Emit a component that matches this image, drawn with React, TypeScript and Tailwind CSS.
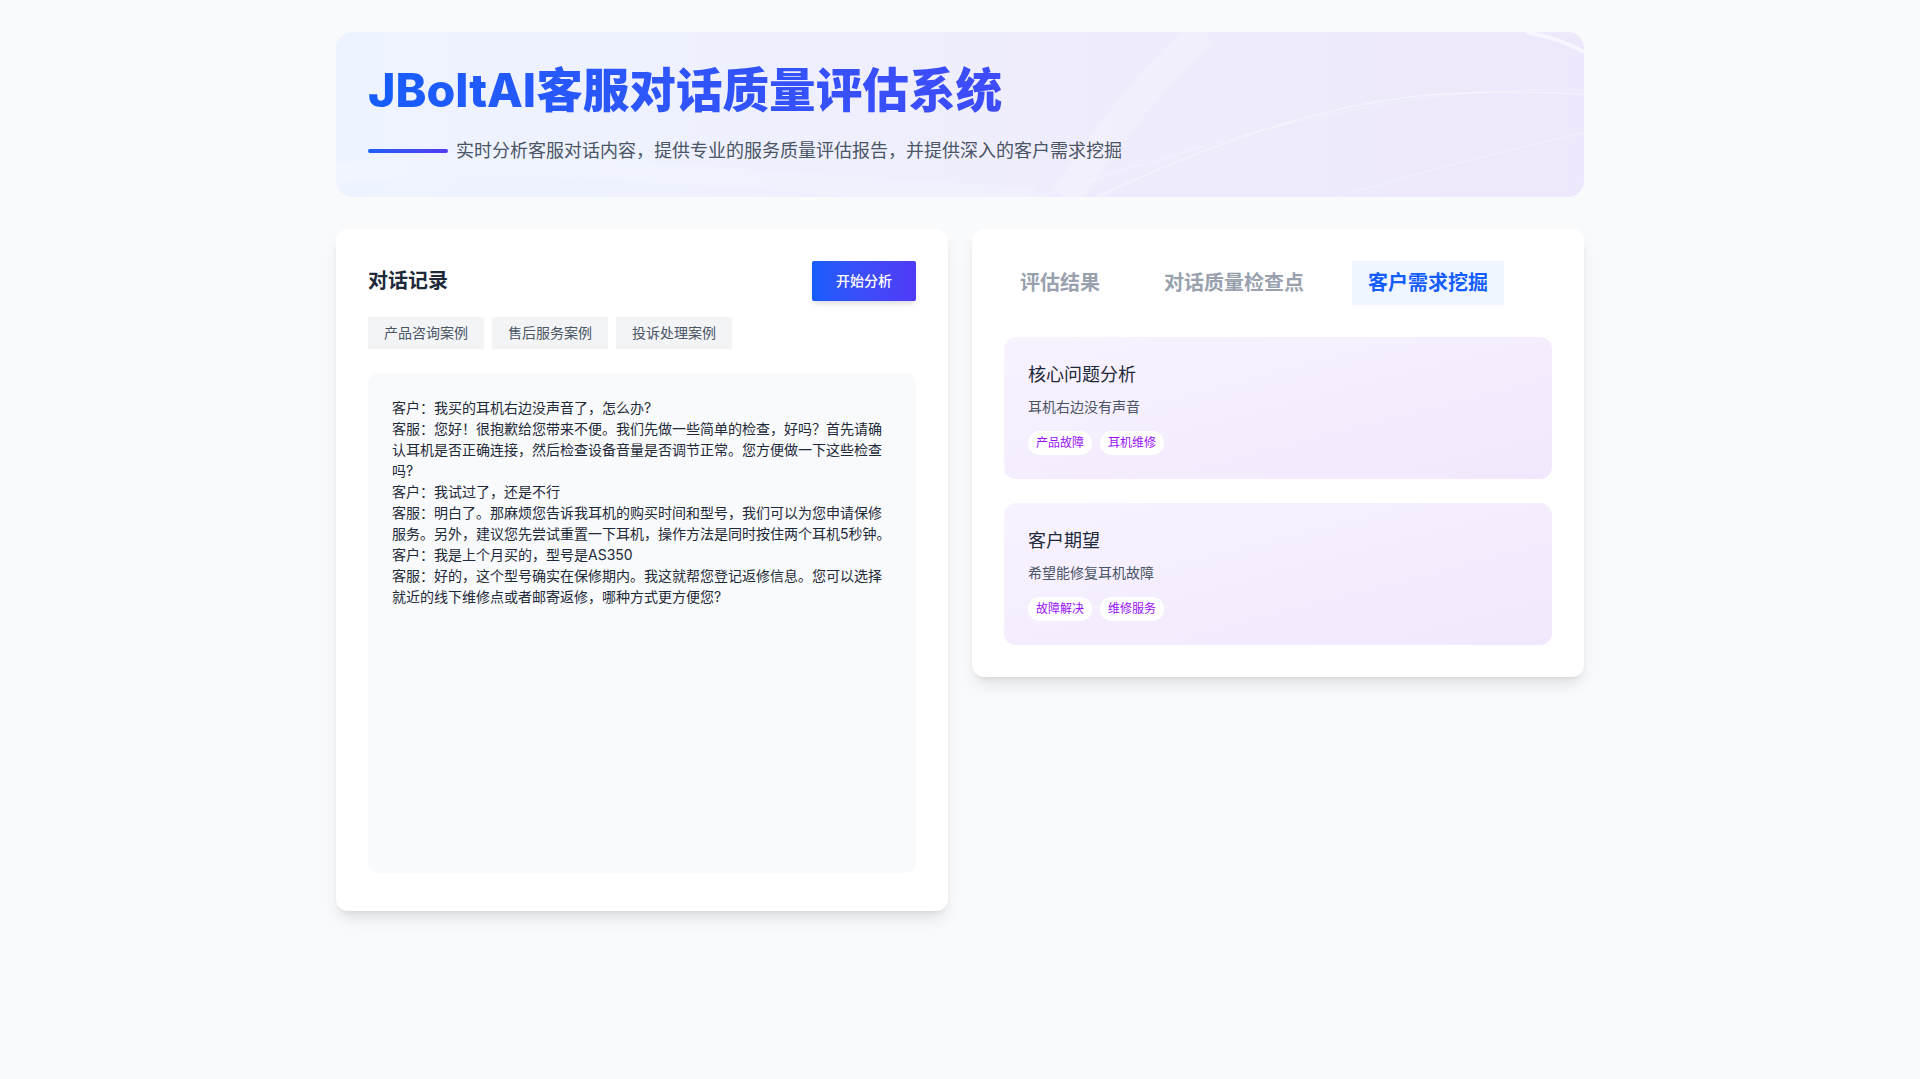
import React from "react";

const dialog = `客户：我买的耳机右边没声音了，怎么办?
客服：您好！很抱歉给您带来不便。我们先做一些简单的检查，好吗？首先请确认耳机是否正确连接，然后检查设备音量是否调节正常。您方便做一下这些检查吗?
客户：我试过了，还是不行
客服：明白了。那麻烦您告诉我耳机的购买时间和型号，我们可以为您申请保修服务。另外，建议您先尝试重置一下耳机，操作方法是同时按住两个耳机5秒钟。
客户：我是上个月买的，型号是AS350
客服：好的，这个型号确实在保修期内。我这就帮您登记返修信息。您可以选择就近的线下维修点或者邮寄返修，哪种方式更方便您?`;

const cards = [
  { title: "核心问题分析", desc: "耳机右边没有声音", tags: ["产品故障", "耳机维修"] },
  { title: "客户期望", desc: "希望能修复耳机故障", tags: ["故障解决", "维修服务"] },
];

export default function App() {
  return (
    <div
      className="min-h-screen bg-gray-50"
      style={{ fontFamily: '"Inter", "Noto Sans CJK SC", "Noto Sans", sans-serif' }}
    >
      <div className="max-w-7xl mx-auto px-4 py-8">
        {/* Header */}
        <header className="relative overflow-hidden rounded-2xl bg-gradient-to-r from-[#eef4ff] via-[#efeefd] to-[#ede8fb] p-8 mb-8">
          <svg
            className="absolute inset-0 w-full h-full pointer-events-none"
            viewBox="0 0 1248 164"
            preserveAspectRatio="none"
            fill="none"
          >
            <path d="M730 164 C 780 90, 830 30, 870 0" stroke="white" strokeOpacity="0.18" strokeWidth="30" />
            <path d="M760 164 C 900 100, 1000 70, 1100 62 C 1170 58, 1220 60, 1248 62" stroke="white" strokeOpacity="0.45" strokeWidth="1.2" />
            <path d="M700 164 C 880 110, 1050 50, 1248 58" stroke="white" strokeOpacity="0.25" strokeWidth="1.2" />
            <path d="M1000 164 C 1080 140, 1160 120, 1248 100" stroke="white" strokeOpacity="0.3" strokeWidth="1.2" />
            <path d="M1190 0 C 1215 5, 1235 12, 1248 20" stroke="white" strokeOpacity="0.55" strokeWidth="4" />
            <path d="M0 140 C 200 120, 400 150, 700 164" stroke="white" strokeOpacity="0.15" strokeWidth="20" />
          </svg>
          <div className="relative">
            <h1 className="text-[46.6px] leading-[1.14] font-extrabold bg-gradient-to-r from-blue-600 to-indigo-600 bg-clip-text text-transparent w-full">
              JBoltAI客服对话质量评估系统
            </h1>
            <div className="mt-5 flex items-center gap-2">
              <span className="block w-20 h-1 rounded-full bg-gradient-to-r from-blue-600 to-indigo-600" />
              <p className="text-lg text-gray-600">
                实时分析客服对话内容，提供专业的服务质量评估报告，并提供深入的客户需求挖掘
              </p>
            </div>
          </div>
        </header>

        {/* Main */}
        <div className="grid grid-cols-2 gap-6 items-start">
          {/* Left */}
          <section className="bg-white rounded-xl shadow-lg p-8 pb-[38px]">
            <div className="flex items-center justify-between h-10">
              <h2 className="text-xl font-bold text-gray-800">对话记录</h2>
              <button className="h-10 px-6 text-sm font-medium text-white bg-gradient-to-r from-blue-600 to-indigo-600 shadow-md rounded-[2px]">
                开始分析
              </button>
            </div>
            <div className="mt-4 flex gap-2">
              {["产品咨询案例", "售后服务案例", "投诉处理案例"].map((t) => (
                <button key={t} className="px-4 py-1.5 text-sm text-gray-600 bg-gray-100">
                  {t}
                </button>
              ))}
            </div>
            <div className="mt-6 h-[500px] rounded-[10px] bg-gray-50 p-6 text-sm leading-[21px] text-gray-800 whitespace-pre-wrap break-words">
              {dialog}
            </div>
          </section>

          {/* Right */}
          <section className="bg-white rounded-xl shadow-lg p-8">
            <div className="flex gap-8">
              <button className="px-4 py-2 text-xl font-bold text-gray-400">评估结果</button>
              <button className="px-4 py-2 text-xl font-bold text-gray-400">对话质量检查点</button>
              <button className="px-4 py-2 text-xl font-bold text-blue-600 bg-blue-50">客户需求挖掘</button>
            </div>
            <div className="mt-8 flex flex-col gap-6">
              {cards.map((c) => (
                <div
                  key={c.title}
                  className="rounded-xl p-6 bg-gradient-to-br from-[#f8f3ff] to-[#f2e8fd]"
                >
                  <h3 className="text-lg text-gray-800">{c.title}</h3>
                  <p className="mt-2 text-sm text-gray-600">{c.desc}</p>
                  <div className="mt-[14px] flex gap-2">
                    {c.tags.map((t) => (
                      <span key={t} className="px-2 py-1 text-xs text-purple-600 bg-white rounded-full">
                        {t}
                      </span>
                    ))}
                  </div>
                </div>
              ))}
            </div>
          </section>
        </div>
      </div>
    </div>
  );
}
